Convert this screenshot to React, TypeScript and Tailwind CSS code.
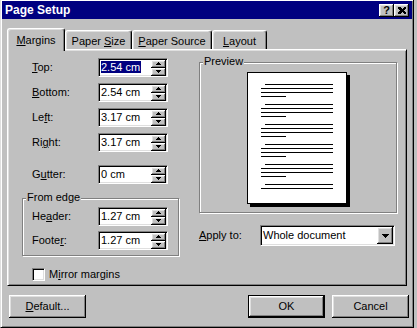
import React from "react";

const raised =
  "shadow-[inset_-1px_-1px_0_#000,inset_1px_1px_0_#fff,inset_-2px_-2px_0_#808080,inset_2px_2px_0_#dfdfdf]";
const sunken =
  "border border-t-[#808080] border-l-[#808080] border-r-white border-b-white shadow-[inset_1px_1px_0_#000,inset_-1px_-1px_0_#dfdfdf]";
const etched = "border border-[#808080] shadow-[1px_1px_0_#fff,inset_1px_1px_0_#fff]";

// pixel triangle, rows = height
const Tri: React.FC<{ rows: number; down?: boolean }> = ({ rows, down }) => {
  const w = rows * 2 - 1;
  return (
    <svg width={w} height={rows} shapeRendering="crispEdges">
      {Array.from({ length: rows }).map((_, i) => {
        const rw = down ? w - 2 * i : 2 * i + 1;
        const x = (w - rw) / 2;
        return <rect key={i} x={x} y={i} width={rw} height={1} fill="#000" />;
      })}
    </svg>
  );
};

const SpinField: React.FC<{ value: string; selected?: boolean }> = ({ value, selected }) => (
  <div className={`flex h-[19px] w-[70px] items-center bg-white ${sunken}`}>
    <div className="flex-1 pl-[2px] leading-[13px]">
      {selected ? <span className="bg-[#000080] pr-px text-white">{value}</span> : value}
    </div>
    <div className="mr-px flex h-[16px] w-[15px] flex-col">
      <div className={`flex h-[8px] items-center justify-center bg-[#c0c0c0] ${raised}`}>
        <Tri rows={3} />
      </div>
      <div className={`flex h-[8px] items-center justify-center bg-[#c0c0c0] ${raised}`}>
        <Tri rows={3} down />
      </div>
    </div>
  </div>
);

const Row: React.FC<{ label: React.ReactNode; value: string; selected?: boolean; className?: string }> = ({
  label,
  value,
  selected,
  className = "",
}) => (
  <div className={`flex items-center ${className}`}>
    <span className="w-[66px]">{label}</span>
    <SpinField value={value} selected={selected} />
  </div>
);

const Tab: React.FC<{ w: string; children: React.ReactNode }> = ({ w, children }) => (
  <div
    className={`flex h-[19px] ${w} items-center justify-center rounded-t-[3px] border-l border-t border-r border-white border-r-black pt-[3px] shadow-[inset_-1px_0_0_#808080,inset_1px_1px_0_#dfdfdf]`}
  >
    {children}
  </div>
);

const Button: React.FC<{ children: React.ReactNode; primary?: boolean; className?: string }> = ({
  children,
  primary,
  className = "",
}) => (
  <button
    className={`flex h-[23px] w-[77px] items-center justify-center bg-[#c0c0c0] ${raised} ${
      primary ? "border border-black" : ""
    } ${className}`}
  >
    {children}
  </button>
);

const pageGroups = [0, 1, 2, 3, 4, 5];

const PagePreview: React.FC = () => (
  <div className="h-[132px] w-[100px] border border-black bg-white shadow-[3px_3px_0_#000]">
    <svg width="98" height="130" shapeRendering="crispEdges">
      {pageGroups.map((g) => {
        const y = 11 + g * 20;
        const lines =
          g === 5
            ? [
                [17, 85, y],
                [13, 85, y + 4],
              ]
            : [
                [17, 85, y],
                [13, 85, y + 4],
                [13, 85, y + 8],
                [13, 38, y + 12],
              ];
        return lines.map(([x1, x2, ly], i) => (
          <line key={`${g}-${i}`} x1={x1} x2={x2} y1={ly + 0.5} y2={ly + 0.5} stroke="#000" strokeWidth="1" />
        ));
      })}
    </svg>
  </div>
);

export default function App() {
  return (
    <div className="flex h-[328px] w-[417px] items-start overflow-hidden bg-[#c0c0c0] font-['Liberation_Sans',Arial,sans-serif] text-[11px] text-black">
      <div
        className={`-mt-px flex h-[329px] w-[414px] flex-col border border-t-[#dfdfdf] border-l-[#dfdfdf] border-r-black border-b-black p-px shadow-[inset_1px_1px_0_#fff,inset_-1px_-1px_0_#808080]`}
      >
        {/* title bar */}
        <div className="flex h-[18px] items-center bg-[#000080] pl-[3px] pr-[3px]">
          <span className="flex-1 text-[12px] font-bold text-white">Page Setup</span>
          <div className={`flex h-[13px] w-[15px] items-center justify-center bg-[#c0c0c0] ${raised}`}>
            <span className="text-[11px] leading-none font-bold">?</span>
          </div>
          <div className={`flex h-[13px] w-[15px] items-center justify-center bg-[#c0c0c0] ${raised}`}>
            <svg width="8" height="7" shapeRendering="crispEdges">
              <path d="M0 0h2l2 2 2-2h2v1l-2 2.5 2 2.5v1h-2l-2-2-2 2H0v-1l2-2.5L0 1z" fill="#000" />
            </svg>
          </div>
        </div>

        <div className="flex flex-col pl-[5px] pr-[3px] pt-[9px]">
          {/* tabs */}
          <div className="flex h-[21px] items-end">
            <div className="relative z-10 -mb-[2px] flex h-[23px] w-[58px] items-center justify-center rounded-t-[3px] border-l border-t border-r border-white border-r-black bg-[#c0c0c0] pt-[1px] shadow-[inset_-1px_0_0_#808080,inset_1px_1px_0_#dfdfdf]">
              <span>
                <u>M</u>argins
              </span>
            </div>
            <Tab w="w-[67px]">
              <span>
                Paper <u>S</u>ize
              </span>
            </Tab>
            <Tab w="w-[80px]">
              <span>
                <u>P</u>aper Source
              </span>
            </Tab>
            <Tab w="w-[55px]">
              <span>
                <u>L</u>ayout
              </span>
            </Tab>
          </div>

          {/* tab panel */}
          <div className="flex h-[237px] w-[400px] border border-white border-r-black border-b-black shadow-[inset_1px_1px_0_#dfdfdf,inset_-1px_-1px_0_#808080]">
            <div className="flex w-[191px] flex-col pl-[24px] pt-[8px]">
              <Row
                label={
                  <>
                    <u>T</u>op:
                  </>
                }
                value="2.54 cm"
                selected
              />
              <Row
                className="mt-[6px]"
                label={
                  <>
                    <u>B</u>ottom:
                  </>
                }
                value="2.54 cm"
              />
              <Row
                className="mt-[6px]"
                label={
                  <>
                    Le<u>f</u>t:
                  </>
                }
                value="3.17 cm"
              />
              <Row
                className="mt-[6px]"
                label={
                  <>
                    Ri<u>g</u>ht:
                  </>
                }
                value="3.17 cm"
              />
              <Row
                className="mt-[13px]"
                label={
                  <>
                    G<u>u</u>tter:
                  </>
                }
                value="0 cm"
              />

              <div className={`relative -ml-[10px] mt-[14px] w-[157px] pb-[5px] pl-[9px] pt-[8px] ${etched}`}>
                <span className="absolute -top-[8px] left-[3px] bg-[#c0c0c0] px-px leading-[13px]">From edge</span>
                <Row
                  label={
                    <>
                      He<u>a</u>der:
                    </>
                  }
                  value="1.27 cm"
                />
                <Row
                  className="mt-[5px]"
                  label={
                    <>
                      Foote<u>r</u>:
                    </>
                  }
                  value="1.27 cm"
                />
              </div>

              <div className="mt-[10px] flex items-center gap-[4px]">
                <div className={`h-[13px] w-[13px] bg-white ${sunken}`} />
                <span>
                  M<u>i</u>rror margins
                </span>
              </div>
            </div>

            <div className="flex flex-col pt-[12px]">
              <div className={`relative h-[151px] w-[198px] pl-[47px] pt-[9px] ${etched}`}>
                <span className="absolute -top-[8px] left-[3px] bg-[#c0c0c0] px-px leading-[13px]">Preview</span>
                <PagePreview />
              </div>

              <div className="mt-[12px] flex items-center">
                <span className="w-[61px]">
                  <u>A</u>pply to:
                </span>
                <div className={`flex h-[21px] w-[135px] items-center bg-white ${sunken}`}>
                  <span className="flex-1 pl-[2px]">Whole document</span>
                  <div className={`mr-px flex h-[17px] w-[16px] items-center justify-center bg-[#c0c0c0] ${raised}`}>
                    <Tri rows={4} down />
                  </div>
                </div>
              </div>
            </div>
          </div>

          {/* buttons */}
          <div className="mt-[9px] flex">
            <Button className="ml-[2px]">
              <span>
                <u>D</u>efault...
              </span>
            </Button>
            <Button primary className="ml-auto">
              OK
            </Button>
            <Button className="ml-[7px]">Cancel</Button>
          </div>
        </div>
      </div>
    </div>
  );
}
